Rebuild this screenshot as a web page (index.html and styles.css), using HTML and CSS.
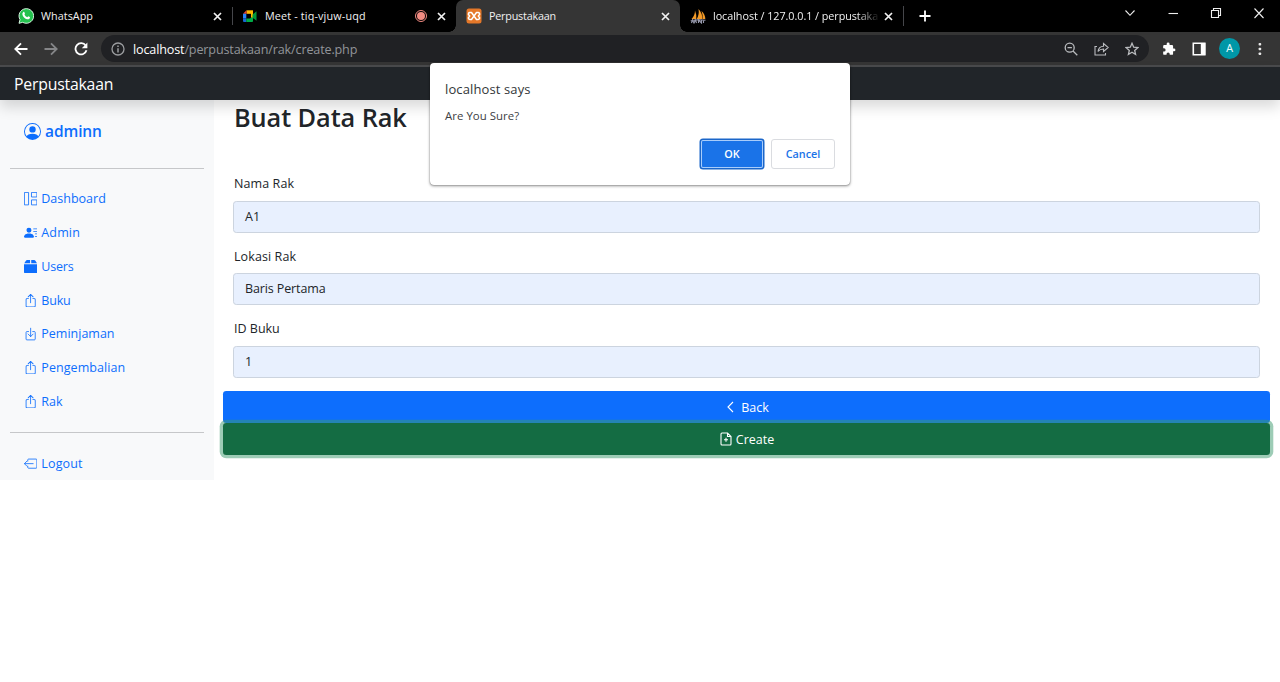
FILE: index.html
```html
<!DOCTYPE html>
<html lang="id">
<head>
<meta charset="utf-8">
<title>Perpustakaan</title>
<link rel="stylesheet" href="styles.css">
</head>
<body>
<svg class="defs" width="0" height="0">
  <symbol id="x" viewBox="0 0 9 9"><path d="M1 1l7 7M8 1L1 8" fill="none" stroke="currentColor" stroke-width="1.7"/></symbol>
  <symbol id="up" viewBox="0 0 16 16"><path fill-rule="evenodd" d="M3.5 6a.5.5 0 0 0-.5.5v8a.5.5 0 0 0 .5.5h9a.5.5 0 0 0 .5-.5v-8a.5.5 0 0 0-.5-.5h-2a.5.5 0 0 1 0-1h2A1.500 1.500 0 0 1 14 6.500v8a1.500 1.500 0 0 1-1.500 1.500h-9A1.500 1.500 0 0 1 2 14.500v-8A1.500 1.500 0 0 1 3.500 5h2a.5.5 0 0 1 0 1h-2z"/><path fill-rule="evenodd" d="M7.646.146a.5.5 0 0 1 .708 0l3 3a.5.5 0 0 1-.708.708L8.500 1.707V10.500a.5.5 0 0 1-1 0V1.707L5.354 3.854a.5.5 0 1 1-.708-.708l3-3z"/></symbol>
</svg>

<div class="tabs">
  <div class="tab tab-first">
    <svg class="fav" viewBox="0 0 16 16"><path d="M1 15.300l1-3.700A7.300 7.300 0 1 1 4.700 14.300z" fill="#25c24f" stroke="#e8fff0" stroke-width=".9"/><path d="M5.300 4.100c.7-.6 1.100-.2 1.600 1.300.2.6-.6.9-.4 1.300.6 1.200 1.500 2 2.700 2.500.4.100.8-1 1.200-.9 1.500.7 1.800.9 1.500 1.700-.8 2-3.500 1.500-5.600-.3C4.500 8.200 3.600 5.700 5.300 4.100z" fill="#fff"/></svg>
    <span class="tab-title t-wa">WhatsApp</span><svg class="close"><use href="#x"/></svg>
  </div>
  <div class="tab tab-meet">
    <svg class="fav" viewBox="0 0 16 16"><path d="M4.500 2.300H11v3.500H4.500z" fill="#ffba00"/><path d="M1 5.800l3.500-3.500v3.500z" fill="#ea4335"/><path d="M1 5.800h3.300v4.700H1z" fill="#2684fc"/><path d="M1 10.500h3.300V14H2a1 1 0 0 1-1-1z" fill="#1766d2"/><path d="M4.300 10.500H8L11 8v4.800a1 1 0 0 1-1 1.200H4.300z" fill="#00ac47"/><path d="M9 4.500h2v5H9z" fill="#ffba00"/><path d="M10.500 6.500L14.500 3.300v9.400l-4-3z" fill="#00973a"/></svg>
    <span class="tab-title t-meet">Meet - tiq-vjuw-uqd</span><span class="rec"></span><svg class="close"><use href="#x"/></svg>
  </div>
  <div class="tab tab-active">
    <svg class="fav" viewBox="0 0 16 16"><rect x=".5" y=".5" width="15" height="15" rx="2.500" fill="#e57829"/><path d="M4 4.500h1.500l5 7H12a1.500 1.500 0 0 0 1-2.700L12.300 8l.7-.8A1.500 1.500 0 0 0 12 4.500h-1.500l-5 7H4a1.500 1.500 0 0 1-1-2.700L3.700 8 3 7.200a1.500 1.500 0 0 1 1-2.700z" fill="none" stroke="#fff" stroke-width="1.500" stroke-linejoin="round"/></svg>
    <span class="tab-title t-app">Perpustakaan</span><svg class="close"><use href="#x"/></svg>
  </div>
  <div class="tab tab-pma">
    <svg class="fav" viewBox="0 0 16 16"><path d="M1.500 11Q5 7.500 5 2.500Q6.800 7 6.300 11zM6.700 11Q9.500 6.500 8.500 1Q12.800 5.500 12 11zM12.400 11Q13 6.500 11.500 3Q15.300 6.500 15.300 11z" fill="#f39a27"/><path d="M.7 12.700Q8 11 15.500 12.300M1.500 15l1-3 1.500 3 1.500-3 1 3M8.500 15v-3l3 3v-3M13.500 12v3" fill="none" stroke="#9799ad" stroke-width="1.100"/></svg>
    <span class="tab-title t-pma">localhost / 127.0.0.1 / perpustaka</span><svg class="close"><use href="#x"/></svg>
  </div>
  <svg class="plus" viewBox="0 0 12 12"><path d="M6 .5v11M.5 6h11" stroke="#fff" stroke-width="1.800"/></svg>
  <div class="window">
    <svg width="12" height="12" viewBox="0 0 12 12"><path d="M1.500 3.500L6 8.300l4.500-4.800"/></svg>
    <svg width="12" height="12" viewBox="0 0 12 12"><path d="M1.500 6.500h9.500"/></svg>
    <svg width="12" height="12" viewBox="0 0 12 12"><path d="M1.500 3.500h7v7h-7zM3.500 3.500v-2h7v7h-2"/></svg>
    <svg width="12" height="12" viewBox="0 0 12 12"><path d="M1.500 1.500l9 9.500M10.500 1.500L1.500 11"/></svg>
  </div>
</div>

<div class="toolbar">
  <svg class="nav" viewBox="0 0 14 14"><path d="M13.500 7H1.500M7 1.300L1.300 7 7 12.700" stroke="#fff"/></svg>
  <svg class="nav" viewBox="0 0 14 14"><path d="M.5 7h12M7 1.300L12.700 7 7 12.700" stroke="#858688"/></svg>
  <svg class="nav" viewBox="0 0 14 14"><path d="M11.700 3.600A5.600 5.600 0 1 0 12.500 8.300" stroke="#fff"/><path d="M13.400.6v5.600H7.800z" fill="#fff"/></svg>
  <div class="omnibox">
    <svg width="14" height="14" viewBox="0 0 14 14"><g fill="none" stroke="#9b9da0" stroke-width="1.300"><circle cx="7" cy="7" r="6"/><path d="M7 6.300V10.500M7 3.500V5" stroke-width="1.500"/></g></svg>
    <span class="url"><b>localhost</b>/perpustakaan/rak/create.php</span>
    <svg class="act" viewBox="0 0 14 14"><circle cx="5.700" cy="5.700" r="4.500"/><path d="M9 9l4.300 4.300M3.500 5.700h4.400"/></svg>
    <svg class="act act-share" viewBox="0 0 15 14"><path d="M3 4.500H1v8.500h10.500v-2M4 9.500C4.500 6 6.500 4.300 9.500 4.200V1.500L14.200 5.500 9.500 9.500V7C7 7 5.300 7.700 4 9.500z" stroke-width="1.100"/></svg>
    <svg class="act" viewBox="0 0 14 14"><path d="M7 1.300l1.700 3.900 4.200.4-3.200 2.800.9 4.100L7 10.300l-3.600 2.200.9-4.100L1.100 5.600l4.200-.4z"/></svg>
  </div>
  <svg class="ext" viewBox="0 0 24 24"><path fill="#fff" d="M20.500 11H19V7a2 2 0 0 0-2-2h-4V3.500a2.500 2.500 0 0 0-5 0V5H4a2 2 0 0 0-2 2v3.800h1.500a2.700 2.700 0 0 1 0 5.400H2V20a2 2 0 0 0 2 2h3.800v-1.500a2.700 2.700 0 0 1 5.400 0V22H17a2 2 0 0 0 2-2v-4h1.500a2.500 2.500 0 0 0 0-5z"/></svg>
  <svg class="panel" viewBox="0 0 14 14"><path d="M1.300 1.300h11.500v11.400H1.300z" fill="none" stroke="#fff" stroke-width="1.600"/><path d="M8.800 1h4.500v12H8.800z" fill="#fff"/></svg>
  <span class="avatar">A</span>
  <svg class="more" viewBox="0 0 4 14"><g fill="#e8e8e8"><rect x=".6" y="1" width="2.600" height="2.600" rx=".8"/><rect x=".6" y="5.700" width="2.600" height="2.600" rx=".8"/><rect x=".6" y="10.400" width="2.600" height="2.600" rx=".8"/></g></svg>
</div>

<header class="navbar"><span class="t-brand">Perpustakaan</span></header>

<div class="page">
  <aside class="sidebar">
    <a class="user"><svg viewBox="0 0 16 16"><path d="M11 6a3 3 0 1 1-6 0 3 3 0 0 1 6 0z"/><path fill-rule="evenodd" d="M0 8a8 8 0 1 1 16 0A8 8 0 0 1 0 8zm8-7a7 7 0 0 0-5.468 11.370C3.242 11.226 4.805 10 8 10s4.757 1.225 5.468 2.370A7 7 0 0 0 8 1z"/></svg><span class="t-user">adminn</span></a>
    <hr>
    <nav class="menu">
      <a><svg viewBox="0 0 16 16"><path fill="none" stroke="currentColor" d="M.5.500h5v15h-5zM9 .5h6.500v5.500H9zM9 9.500h6.500v6H9z"/></svg><span class="t-dash">Dashboard</span></a>
      <a><svg viewBox="0 0 16 16"><path d="M6 8a3 3 0 1 0 0-6 3 3 0 0 0 0 6zm-5 6s-1 0-1-1 1-4 6-4 6 3 6 4-1 1-1 1H1zM11 3.500a.5.5 0 0 1 .5-.5h4a.5.5 0 0 1 0 1h-4a.5.5 0 0 1-.5-.5zm.5 2.500a.5.5 0 0 0 0 1h4a.5.5 0 0 0 0-1h-4zm2 3a.5.5 0 0 0 0 1h2a.5.5 0 0 0 0-1h-2zm0 3a.5.5 0 0 0 0 1h2a.5.5 0 0 0 0-1h-2z"/></svg><span class="t-admin">Admin</span></a>
      <a><svg viewBox="0 0 16 16"><path d="M0 5h16v9.500a1.500 1.500 0 0 1-1.500 1.500h-13A1.500 1.500 0 0 1 0 14.500zM.3 4L2.500.7A1.500 1.500 0 0 1 3.700 0H7.300v4zM8.700 4V0h3.600a1.500 1.500 0 0 1 1.200.7L15.700 4z"/></svg><span class="t-users">Users</span></a>
      <a><svg viewBox="0 0 16 16"><use href="#up"/></svg><span class="t-buku">Buku</span></a>
      <a><svg viewBox="0 0 16 16"><path fill="none" stroke="currentColor" stroke-linecap="round" stroke-linejoin="round" d="M5.500 5.500h-2a1 1 0 0 0-1 1v8a1 1 0 0 0 1 1h9a1 1 0 0 0 1-1v-8a1 1 0 0 0-1-1h-2M8 1.500v10M5 8.500l3 3 3-3"/></svg><span class="t-pinjam">Peminjaman</span></a>
      <a><svg viewBox="0 0 16 16"><use href="#up"/></svg><span class="t-kembali">Pengembalian</span></a>
      <a><svg viewBox="0 0 16 16"><use href="#up"/></svg><span class="t-rak">Rak</span></a>
    </nav>
    <hr>
    <nav class="menu menu-end">
      <a><svg viewBox="0 0 16 16"><path fill="none" stroke="currentColor" stroke-linecap="round" stroke-linejoin="round" d="M4.500 5V3.500a1 1 0 0 1 1-1h9a1 1 0 0 1 1 1v9a1 1 0 0 1-1 1h-9a1 1 0 0 1-1-1V11M11 8H.7M3.500 5l-3 3 3 3"/></svg><span class="t-logout">Logout</span></a>
    </nav>
  </aside>
  <main class="content">
    <h1><span class="t-h1">Buat Data Rak</span></h1>
    <form>
      <label><span class="t-l1">Nama Rak</span></label><div class="input"><span class="t-i1">A1</span></div>
      <label><span class="t-l2">Lokasi Rak</span></label><div class="input"><span class="t-i2">Baris Pertama</span></div>
      <label><span class="t-l3">ID Buku</span></label><div class="input"><span class="t-i3">1</span></div>
    </form>
    <div class="btn btn-back"><svg class="i-back" viewBox="0 0 14 14"><path d="M9 2L4 7l5 5"/></svg><span class="t-back">Back</span></div>
    <div class="btn btn-create"><svg class="i-create" viewBox="0 0 14 14"><path d="M8.500 1H3a1 1 0 0 0-1 1v10a1 1 0 0 0 1 1h8a1 1 0 0 0 1-1V4.500zM8.500 1v3.500H12M7 5.700v4M5 7.700h4"/></svg><span class="t-create">Create</span></div>
  </main>
</div>

<div class="dialog">
  <p class="says"><span class="t-says">localhost says</span></p>
  <p class="msg"><span class="t-msg">Are You Sure?</span></p>
  <div class="dialog-actions"><span class="ok"><span>OK</span></span><span class="cancel"><span class="t-cancel">Cancel</span></span></div>
</div>
</body>
</html>
```

FILE: styles.css
```css
* { box-sizing: border-box; }
body { margin: 0; width: 1280px; height: 682px; overflow: hidden; background: #fff; font-family: "Open Sans", "Noto Sans", sans-serif; font-size: 12.5px; color: #212529; white-space: nowrap; }
svg { display: block; flex: none; }
.defs { position: absolute; }

.tabs { display: flex; align-items: center; height: 32px; background: #000; color: #f1f1f1; font-size: 10.8px; }
.tab { display: flex; align-items: center; height: 32px; padding: 0 10px 0 18px; width: 232px; }
.tab-meet { width: 224px; padding-left: 10px; position: relative; }
.tab-meet::before { content: ""; position: absolute; left: 0; top: 7px; width: 1px; height: 18px; background: #45464a; }
.tab-active { width: 224px; padding-left: 10px; background: #353535; border-radius: 7px 7px 0 0; position: relative; }
.tab-active::before, .tab-active::after { content: ""; position: absolute; bottom: 0; width: 7px; height: 7px; }
.tab-active::before { left: -7px; background: radial-gradient(circle at 0 0, #000 6.500px, #353535 7px); }
.tab-active::after { right: -7px; background: radial-gradient(circle at 100% 0, #000 6.500px, #353535 7px); }
.tab-pma { width: 224px; padding-left: 10px; border-image: linear-gradient(#000 22%, #45464a 22%, #45464a 78%, #000 78%) 1; border-right: 1px solid; border-image-width: 0 1px 0 0; }
.fav { width: 16px; height: 16px; margin-right: 7px; }
.tab-title { flex: 1; padding-bottom: 2px; }
.t-wa { letter-spacing: .05px; }
.t-meet { letter-spacing: .15px; }
.t-app { letter-spacing: -.22px; }
.t-pma { margin-right: 8px; letter-spacing: -.05px; -webkit-mask-image: linear-gradient(90deg, #000 86%, transparent); mask-image: linear-gradient(90deg, #000 86%, transparent); }
.tab-pma .t-pma { margin-right: 4px; }
.close { width: 9px; height: 9px; }
.rec { width: 12px; height: 12px; border: 1px solid #f28b82; border-radius: 50%; background: #f28b82; background-clip: content-box; padding: 1px; margin-right: 10px; }
.plus { width: 12px; height: 12px; margin-left: 15px; }
.window { display: flex; gap: 31px; margin: -6px 15.500px 0 auto; }
.window path { fill: none; stroke: #eee; stroke-width: 1.100; }

.toolbar { display: flex; align-items: center; height: 35px; background: #353535; border-bottom: 2px solid #4a4b4d; padding-left: 14px; }
.nav { width: 14px; height: 14px; margin-right: 16px; fill: none; stroke-width: 1.800; }
.omnibox { display: flex; align-items: center; width: 1048px; height: 27px; margin-left: -3px; padding: 0 10px; border-radius: 14px; background: #202124; font-size: 12.6px; color: #92959a; }
.url { margin-left: 8px; flex: 1; padding-top: 1px; letter-spacing: -.15px; }
.url b { color: #fff; font-weight: 400; }
.act { width: 14px; height: 14px; margin-left: 16px; fill: none; stroke: #b9bbbe; stroke-width: 1.300; }
.act-share { width: 15px; }
.ext { width: 14px; height: 14px; margin-left: 13px; }
.panel { width: 14px; height: 14px; margin-left: 16px; }
.avatar { width: 21px; height: 21px; margin-left: 13px; border-radius: 50%; background: #0097a7; color: #e8fbfd; font: 11px/21px Roboto, sans-serif; text-align: center; }
.more { width: 4px; height: 14px; margin-left: 18px; }

.navbar { position: relative; z-index: 1; display: flex; align-items: center; height: 33px; padding: 1px 14px 0; background: #212529; color: #fff; font-size: 15.8px; letter-spacing: -.2px; box-shadow: 0 7px 14px rgba(0,0,0,.15); }
.page { display: flex; align-items: flex-start; }
.sidebar { width: 213.500px; height: 380px; padding: 14px 10px 0; background: #f8f9fa; color: #0d6efd; }
.sidebar hr { margin: 0; border: 0; height: 1px; background: #c6c7c9; }
.user { display: flex; align-items: center; height: 34px; margin-bottom: 20px; padding-left: 14px; font-size: 15.5px; font-weight: 600; }
.user svg { width: 17px; height: 17px; margin-right: 4px; fill: currentColor; }
.t-user { letter-spacing: -.1px; }
.menu { display: flex; flex-direction: column; padding: 13px 14px 14px; }
.menu a { display: flex; align-items: center; height: 33.770px; }
.menu svg { width: 13.300px; height: 13.300px; margin-right: 4px; fill: currentColor; }
.t-users, .t-buku { letter-spacing: -.2px; }
.t-admin, .t-logout { letter-spacing: .15px; }
.t-kembali { letter-spacing: .07px; }
.content { flex: 1; padding: 0 10px 0 9.500px; }
h1 { margin: 0 0 41px; padding-left: 11px; height: 34px; font-size: 25.3px; line-height: 35px; font-weight: 600; letter-spacing: -.08px; }
form { display: flex; flex-direction: column; padding: 0 10px; }
label { height: 20px; margin-bottom: 5.500px; line-height: 18px; padding-left: 1px; }
.t-l1, .t-l2 { letter-spacing: .1px; }
.t-i2 { letter-spacing: -.12px; }
.input { display: flex; align-items: center; height: 32px; margin-bottom: 15px; padding: 0 11px 1px; border: 1px solid #ccd4df; border-radius: 3.300px; background: #e8f0fe; }
.input:last-child { margin-bottom: 13px; }
.btn { display: flex; justify-content: center; align-items: center; height: 32.300px; padding-top: 1px; border-radius: 3.300px; color: #fff; }
.btn svg { width: 14px; height: 14px; margin-right: 3px; fill: none; stroke: #fff; stroke-width: 1.100; }
.btn-back { background: #0d6efd; }
.btn-create { position: relative; background: #146c43; box-shadow: 0 0 0 3.300px rgba(60,153,110,.5); }

.dialog { position: absolute; left: 430px; top: 63px; z-index: 2; width: 420px; height: 122px; padding: 16px 15px; background: #fff; border-radius: 4px; box-shadow: 0 1px 3px rgba(0,0,0,.45), 0 0 1px rgba(0,0,0,.5); }
.dialog p { margin: 0; }
.says { height: 27px; line-height: 20px; font-size: 13px; letter-spacing: .12px; color: #333639; }
.msg { height: 33px; line-height: 19px; font-size: 11.4px; letter-spacing: .05px; color: #3c4043; }
.dialog-actions { display: flex; justify-content: flex-end; gap: 8px; font-size: 10.800px; font-weight: 600; line-height: 28px; text-align: center; }
.ok { width: 62px; height: 28px; margin: 1px 0 0; border-radius: 2px; background: #1a73e8; color: #fff; box-shadow: inset 0 0 0 1px #a9cdfb, 0 0 0 1.500px #1b66c9; }
.cancel { width: 64px; height: 30px; border: 1px solid #dadce0; border-radius: 3px; color: #1a73e8; }
```
